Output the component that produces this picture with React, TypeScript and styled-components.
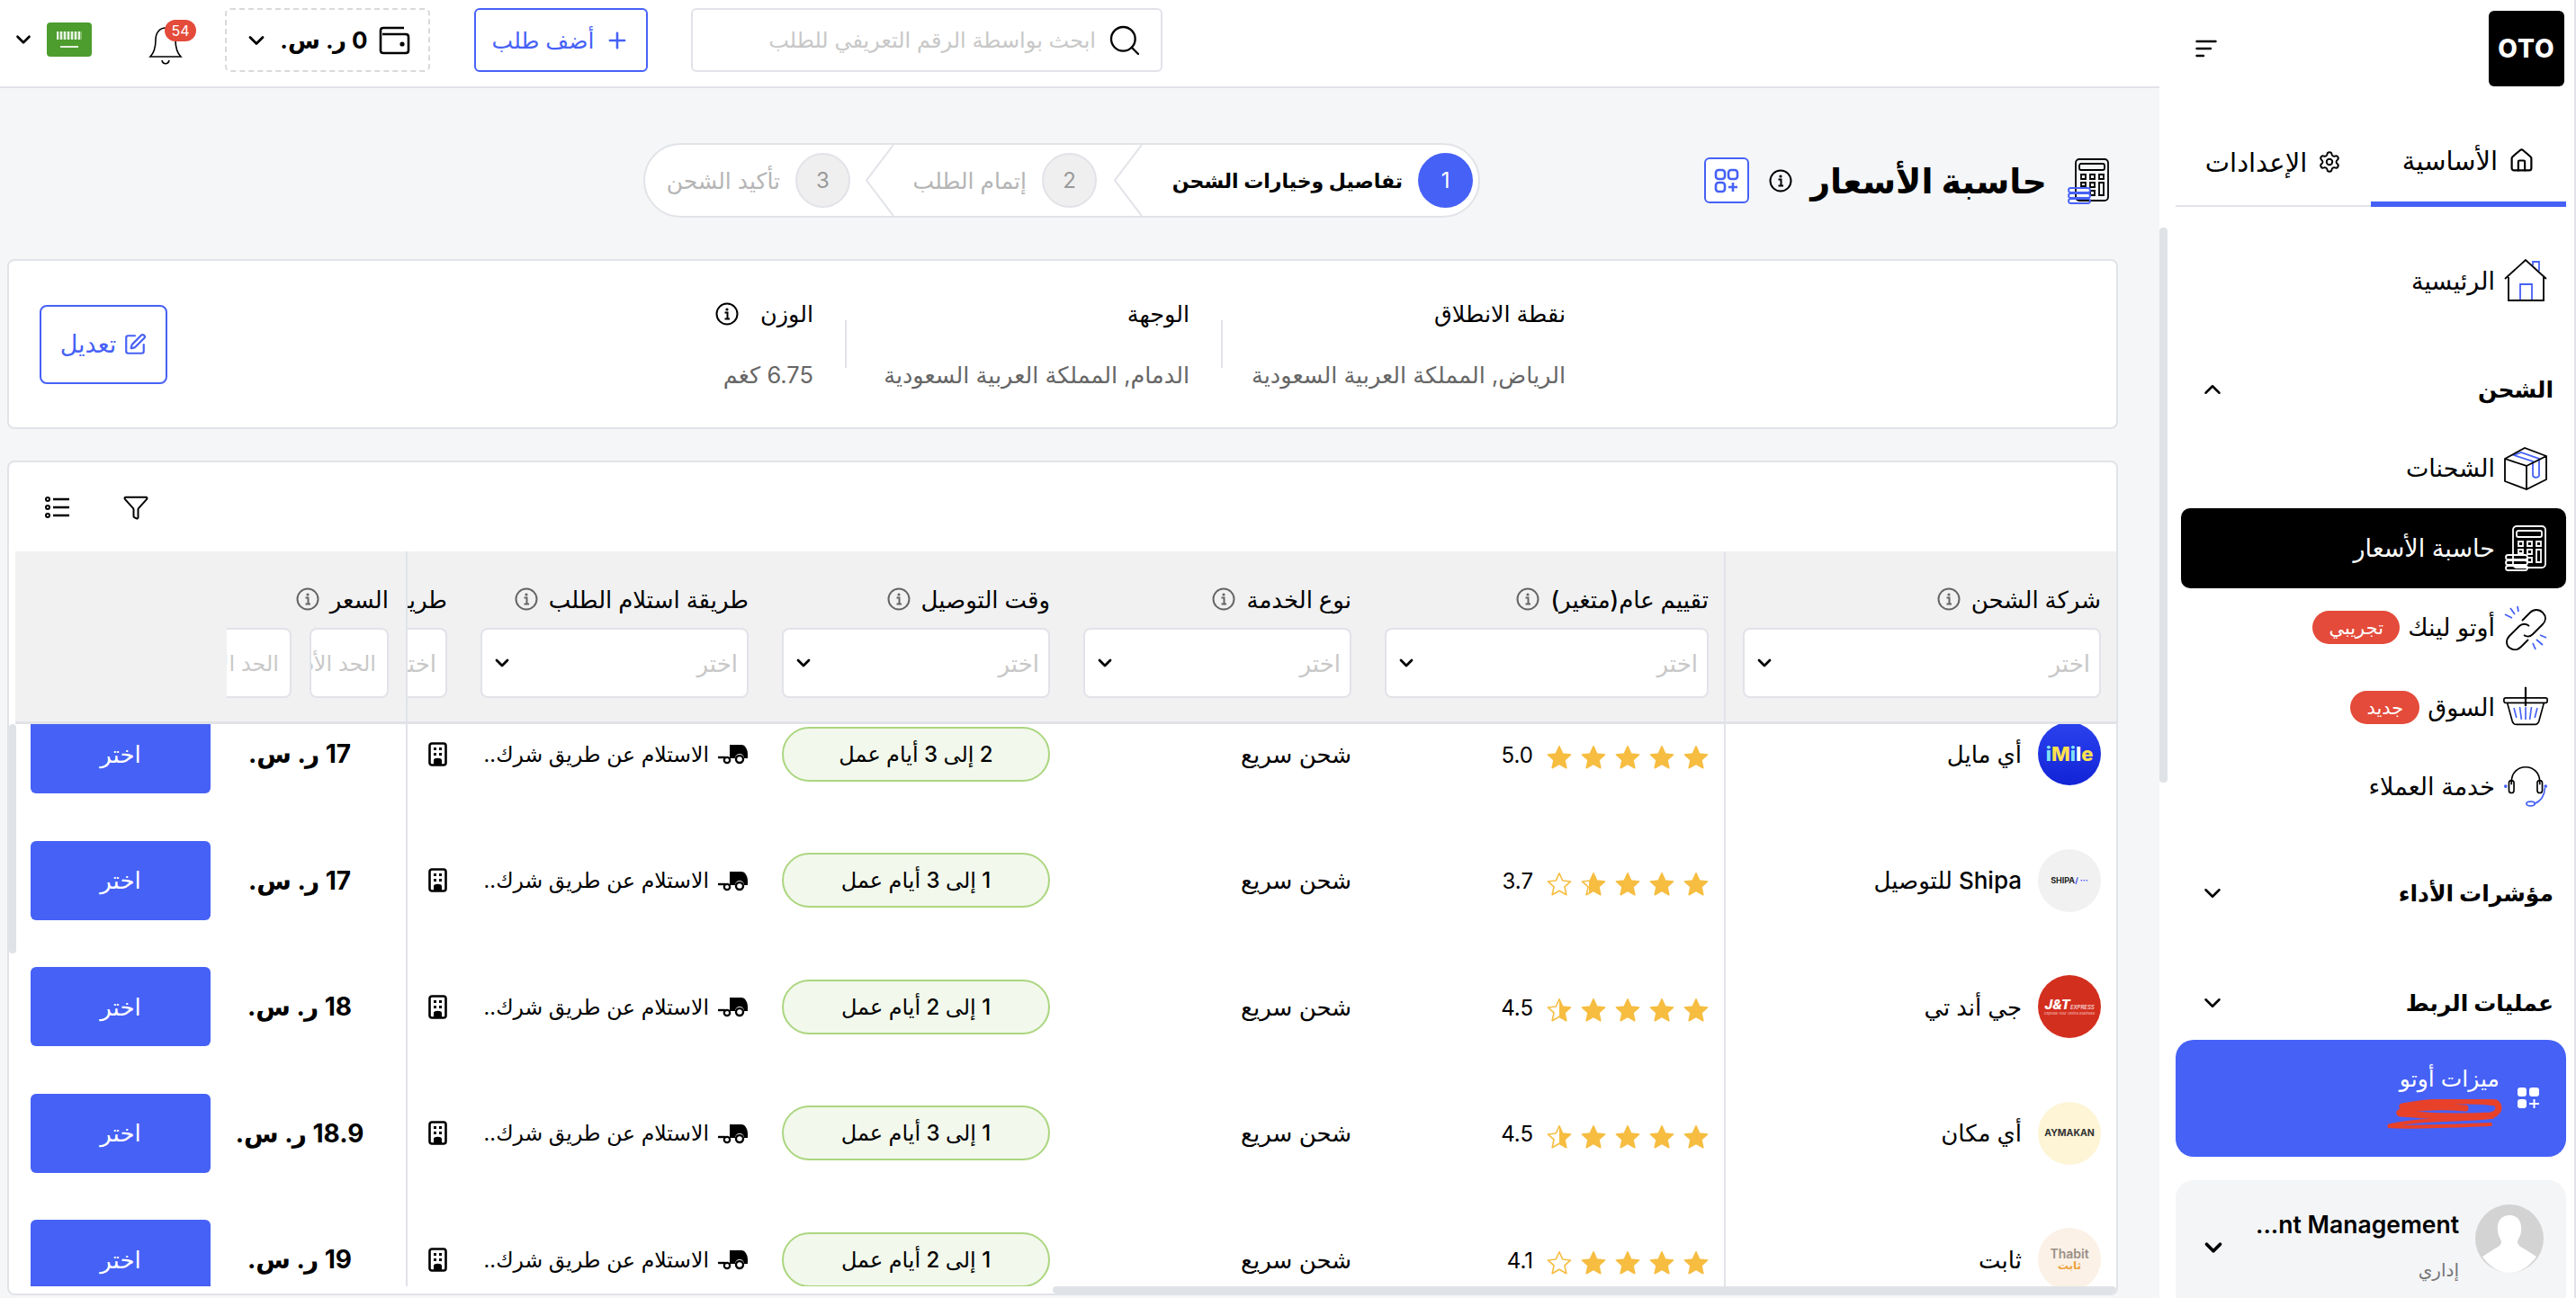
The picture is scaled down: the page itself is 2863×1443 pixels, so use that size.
import React from "react";
import styled, { createGlobalStyle } from "styled-components";
import { ChevronDown, ChevronUp, Plus, Search, Settings, Home, SquarePen, Funnel } from "lucide-react";

const blue = "#4661f6";
const line = "#e1e3e8";

const GlobalStyle = createGlobalStyle`
  html, body { margin: 0; padding: 0; height: 100%; overflow: hidden; background: #f5f6f8; }
  * { box-sizing: border-box; }
  body { font-family: "Inter", "DejaVu Sans", sans-serif; color: #000; }
`;

const Page = styled.div`
  direction: rtl;
  display: flex;
  width: 2863px;
  height: 1443px;
  overflow: hidden;
`;

/* sidebar */
const Sidebar = styled.aside`
  position: relative;
  flex: 0 0 463px;
  height: 1443px;
  background: #fff;
  border-right: 2px solid ${line};
  padding: 12px 9px 0 18px;
  display: flex;
  flex-direction: column;
  overflow: hidden;
`;
const SideThumb = styled.div`
  position: absolute;
  left: 0;
  top: 253px;
  width: 9px;
  height: 617px;
  border-radius: 4px;
  background: #dfe2e6;
`;
const SideTop = styled.div`
  display: flex;
  flex: none;
  justify-content: space-between;
  align-items: center;
  height: 84px;
  padding-left: 22px;
  padding-right: 2px;
`;
const Logo = styled.div`
  width: 84px;
  height: 84px;
  border-radius: 6px;
  background: #000;
  color: #fff;
  font-weight: 800;
  font-size: 28px;
  letter-spacing: 1px;
  display: flex;
  align-items: center;
  justify-content: center;
`;
const Tabs = styled.div`
  display: flex;
  flex: none;
  margin-top: 46px;
  height: 88px;
`;
const Tab = styled.div<{ $on?: boolean }>`
  flex: 1;
  display: flex;
  align-items: center;
  justify-content: center;
  gap: 12px;
  font-size: 29px;
  padding-bottom: 10px;
  height: 88px;
  border-bottom: ${(p) => (p.$on ? `6px solid ${blue}` : `2px solid ${line}`)};
`;
const NavList = styled.div`
  display: flex;
  flex: none;
  flex-direction: column;
`;
const NavRow = styled.div<{ $active?: boolean; $top: number }>`
  display: flex;
  align-items: center;
  gap: 9px;
  height: 88.5px;
  margin-top: ${(p) => p.$top}px;
  padding-right: 20px;
  font-size: 27px;
  white-space: nowrap;
  width: 428px;
  border-radius: 10px;
  background: ${(p) => (p.$active ? "#000" : "transparent")};
  color: ${(p) => (p.$active ? "#fff" : "#000")};
`;
const NavIcon = styled.span`
  width: 50px;
  height: 50px;
  flex: none;
  display: flex;
  align-items: center;
  justify-content: center;
`;
const Badge = styled.span`
  background: #e44b3a;
  color: #fff;
  font-size: 21px;
  height: 37px;
  padding: 0 18px;
  border-radius: 19px;
  display: inline-flex;
  align-items: center;
`;
const SectionRow = styled.div<{ $top: number }>`
  display: flex;
  flex: none;
  align-items: center;
  justify-content: space-between;
  height: 40px;
  margin-top: ${(p) => p.$top}px;
  padding: 0 14px 0 26px;
  font-size: 25px;
  font-weight: 700;
`;
const PromoCard = styled.div`
  flex: none;
  margin-top: 21px;
  height: 130px;
  border-radius: 20px;
  background: ${blue};
  color: #fff;
  display: flex;
  align-items: center;
  padding: 0 29px 0 0;
  gap: 19px;
  font-size: 25px;
`;
const PromoBody = styled.div`
  display: flex;
  flex-direction: column;
  gap: 8px;
  margin-top: -2px;
`;
const ProfileCard = styled.div`
  flex: none;
  margin-top: 26px;
  height: 140px;
  border-radius: 20px 20px 0 0;
  background: #f4f5f7;
  display: flex;
  align-items: flex-start;
  padding: 27px 25px 0 0;
  gap: 18px;
`;
const ProfileText = styled.div`
  flex: 1;
  display: flex;
  flex-direction: column;
  align-items: flex-start;
`;
const ProfileName = styled.div`
  direction: ltr;
  font-size: 26.5px;
  font-weight: 600;
  line-height: 44px;
  white-space: nowrap;
`;
const ProfileRole = styled.div`
  color: #777;
  font-size: 20px;
  margin-top: 17px;
`;
const ProfileChevron = styled.div`
  margin: 33px 0 0 27px;
`;

/* main */
const Main = styled.main`
  flex: 1;
  min-width: 0;
  height: 1443px;
  display: flex;
  flex-direction: column;
`;
const TopBar = styled.header`
  height: 98px;
  flex: none;
  background: #fff;
  border-bottom: 2px solid ${line};
  display: flex;
  justify-content: flex-end;
  align-items: flex-start;
  padding: 9px 0 0 13px;
`;
const SearchBox = styled.div`
  width: 524px;
  height: 71px;
  border: 2px solid ${line};
  border-radius: 6px;
  display: flex;
  align-items: center;
  gap: 12px;
  padding: 0 20px;
  color: #c8c8c8;
  font-size: 24px;
  white-space: nowrap;
`;
const AddButton = styled.div`
  width: 193px;
  height: 71px;
  margin-right: 48px;
  border: 2px solid ${blue};
  border-radius: 6px;
  color: ${blue};
  font-size: 25px;
  display: flex;
  align-items: center;
  justify-content: center;
  gap: 12px;
`;
const WalletBox = styled.div`
  width: 228px;
  height: 71px;
  margin-right: 49px;
  border: 2px dashed #d9d9d9;
  border-radius: 6px;
  display: flex;
  align-items: center;
  justify-content: center;
  gap: 12px;
  font-size: 26px;
  font-weight: 700;
`;
const BellWrap = styled.div`
  position: relative;
  width: 40px;
  height: 48px;
  margin: 17px 46px 0 0;
`;
const BellCount = styled.span`
  position: absolute;
  top: -4px;
  left: 19px;
  width: 35px;
  height: 24px;
  border-radius: 12px;
  background: #e44b3a;
  color: #fff;
  font-size: 16px;
  display: flex;
  align-items: center;
  justify-content: center;
  direction: ltr;
`;
const FlagGroup = styled.div`
  display: flex;
  align-items: center;
  gap: 13px;
  margin: 16px 62px 0 0;
`;
const Flag = styled.div`
  width: 50px;
  height: 38px;
  border-radius: 4px;
  background: #4c9c2e;
  display: flex;
  flex-direction: column;
  align-items: center;
  justify-content: center;
  gap: 7px;
`;
const FlagScript = styled.span`
  width: 28px;
  height: 9px;
  background: repeating-linear-gradient(90deg, #e9f4e4 0 2px, #7fb86a 2px 4px);
`;
const FlagSword = styled.span`
  width: 20px;
  height: 1.500px;
  background: #e6f2e1;
`;

const Content = styled.div`
  flex: 1;
  min-height: 0;
  padding: 0 46px 0 8px;
  display: flex;
  flex-direction: column;
`;
const TitleRow = styled.div`
  height: 190px;
  flex: none;
  display: flex;
  align-items: center;
  padding: 15px 9px 0 0;
`;
const TitleIcon = styled.span`
  width: 48px;
  height: 52px;
  display: flex;
  margin-left: 22px;
`;
const Title = styled.h1`
  margin: 0 0 0 20px;
  font-size: 38px;
  font-weight: 700;
  white-space: nowrap;
`;
const AppsButton = styled.div`
  width: 50px;
  height: 51px;
  margin-right: 22px;
  border: 2px solid ${blue};
  border-radius: 6px;
  background: #fff;
  display: flex;
  align-items: center;
  justify-content: center;
`;
const Stepper = styled.div`
  width: 930px;
  height: 83px;
  margin-right: auto;
  margin-left: 707px;
  background: #fff;
  border: 2px solid ${line};
  border-radius: 42px;
  display: flex;
  align-items: center;
  padding-right: 6px;
`;
const StepItem = styled.div<{ $w: number; $on?: boolean; $lead?: number }>`
  flex: 0 0 ${(p) => p.$w}px;
  margin-right: ${(p) => p.$lead ?? 0}px;
  display: flex;
  align-items: center;
  gap: 17px;
  font-size: ${(p) => (p.$on ? 22 : 25)}px;
  white-space: nowrap;
  color: ${(p) => (p.$on ? "#000" : "#b5b5b5")};
  font-weight: ${(p) => (p.$on ? 600 : 400)};
`;
const StepDot = styled.span<{ $on?: boolean }>`
  width: 61px;
  height: 61px;
  flex: none;
  border-radius: 50%;
  display: flex;
  align-items: center;
  justify-content: center;
  font-size: 24px;
  font-weight: 400;
  background: ${(p) => (p.$on ? blue : "#efefef")};
  color: ${(p) => (p.$on ? "#fff" : "#999")};
  border: ${(p) => (p.$on ? "none" : `2px solid ${line}`)};
`;
const StepNotch = styled.svg`
  flex: none;
  height: 79px;
  width: 34px;
`;

const InfoCard = styled.section`
  height: 189px;
  flex: none;
  background: #fff;
  border: 2px solid ${line};
  border-radius: 8px;
  display: flex;
  align-items: center;
  padding: 0 612px 0 34px;
`;
const InfoCol = styled.div`
  width: 381px;
  display: flex;
  flex-direction: column;
  gap: 37px;
  white-space: nowrap;
  &:last-of-type { width: auto; }
`;
const InfoLabel = styled.div`
  display: flex;
  align-items: center;
  gap: 24px;
  font-size: 25.500px;
  line-height: 32px;
  font-weight: 500;
`;
const InfoValue = styled.div`
  font-size: 25.500px;
  line-height: 30px;
  color: #666;
`;
const InfoRule = styled.div`
  width: 2px;
  height: 53px;
  flex: none;
  background: ${line};
  margin-left: 35px;
`;
const EditButton = styled.div`
  width: 142px;
  height: 88px;
  margin-right: auto;
  border: 2px solid ${blue};
  border-radius: 8px;
  color: ${blue};
  display: flex;
  align-items: center;
  justify-content: center;
  gap: 8px;
  font-size: 27px;
`;

const TableCard = styled.section`
  position: relative;
  margin-top: 35px;
  height: 928px;
  flex: none;
  background: #fff;
  border: 2px solid ${line};
  border-radius: 8px;
  display: flex;
  flex-direction: column;
  overflow: hidden;
  padding-left: 7px;
`;
const TableThumb = styled.div`
  position: absolute;
  left: 0;
  top: 291px;
  width: 8px;
  height: 255px;
  border-radius: 4px;
  background: #dfe2e6;
`;
const Tools = styled.div`
  height: 99px;
  flex: none;
  display: flex;
  justify-content: flex-end;
  align-items: center;
  gap: 58px;
  padding: 0 0 0 33px;
`;
const Row = styled.div<{ $head?: boolean }>`
  display: flex;
  flex: none;
  height: ${(p) => (p.$head ? "192px" : "140.5px")};
  background: ${(p) => (p.$head ? "#f1f1f2" : "#fff")};
  border-bottom: ${(p) => (p.$head ? `3px solid ${line}` : "none")};
`;
const RowsClip = styled.div`
  flex: 1;
  min-height: 0;
  overflow: hidden;
`;
const RowsScroll = styled.div`
  margin-top: -37px;
`;
const Scrollable = styled.div`
  flex: 1;
  min-width: 0;
  display: flex;
  overflow: hidden;
`;
const Cell = styled.div<{ $w: number; $first?: boolean }>`
  flex: 0 0 ${(p) => p.$w}px;
  padding: 0 17px 0 ${(p) => (p.$first ? 19 : 20)}px;
  display: flex;
  align-items: center;
  border-left: ${(p) => (p.$first ? `2px solid ${line}` : "none")};
  font-size: 26px;
`;
const HeadCell = styled(Cell)`
  flex-direction: column;
  align-items: stretch;
  padding-top: 38px;
`;
const HeadLabel = styled.div`
  display: flex;
  align-items: center;
  gap: 12px;
  height: 30px;
  font-size: 26px;
  font-weight: 500;
  white-space: nowrap;
`;
const SelectBox = styled.div`
  margin-top: 17px;
  height: 78px;
  background: #fff;
  border: 2px solid ${line};
  border-radius: 8px;
  display: flex;
  align-items: center;
  justify-content: space-between;
  padding: 0 10px 0 10px;
  color: #c8c8c8;
  font-size: 26px;
  white-space: nowrap;
`;
const ClippedCell = styled.div`
  flex: 1;
  min-width: 0;
  padding-right: 17px;
  display: flex;
  align-items: center;
  overflow: hidden;
`;
const ClippedHead = styled(ClippedCell)`
  flex-direction: column;
  align-items: flex-start;
  padding-top: 38px;
`;
const ClippedSelect = styled(SelectBox)`
  width: 120px;
  flex: none;
`;
const FrozenHead = styled.div`
  flex: 0 0 436px;
  border-right: 2px solid ${line};
  padding: 38px 19px 0 0;
  display: flex;
  flex-direction: column;
`;
const FrozenCell = styled.div`
  flex: 0 0 436px;
  border-right: 2px solid ${line};
  padding: 0 19px 0 17px;
  display: flex;
  align-items: center;
`;
const RangeRow = styled.div`
  display: flex;
  gap: 20px;
  overflow: hidden;
  width: 180px;
`;
const RangeInput = styled(SelectBox)<{ $w: number; $cut?: boolean }>`
  flex: 0 0 ${(p) => p.$w}px;
  overflow: hidden;
  padding: 0 12px 0 0;
  font-size: 24px;
  border-left: ${(p) => (p.$cut ? "none" : `2px solid ${line}`)};
  border-radius: ${(p) => (p.$cut ? "0 8px 8px 0" : "8px")};
`;
const Carrier = styled.div`
  display: flex;
  align-items: center;
  gap: 18px;
  font-weight: 500;
  font-size: 26px;
  white-space: nowrap;
`;
const Avatar = styled.div<{ $bg: string }>`
  width: 70px;
  height: 70px;
  flex: none;
  border-radius: 50%;
  background: ${(p) => p.$bg};
  display: flex;
  flex-direction: column;
  align-items: center;
  justify-content: center;
  overflow: hidden;
  direction: ltr;
`;
const LogoWord = styled.span<{ $c: string; $s: number; $w?: number; $i?: boolean }>`
  color: ${(p) => p.$c};
  font-size: ${(p) => p.$s}px;
  font-weight: ${(p) => p.$w ?? 700};
  font-style: ${(p) => (p.$i ? "italic" : "normal")};
  line-height: 1.05;
  white-space: nowrap;
`;
const Tint = styled.span<{ $c: string }>`
  color: ${(p) => p.$c};
`;
const Stars = styled.div`
  display: flex;
  align-items: center;
  gap: 10px;
  margin-top: 8px;
`;
const Score = styled.span`
  font-size: 24px;
  margin-right: 5px;
  margin-top: -6px;
`;
const Pill = styled.div`
  width: 298px;
  height: 61px;
  border: 2px solid #abd67f;
  border-radius: 31px;
  background: #f2f8ec;
  display: flex;
  align-items: center;
  justify-content: center;
  font-size: 24px;
  font-weight: 500;
  white-space: nowrap;
`;
const Pickup = styled.div`
  display: flex;
  align-items: center;
  gap: 10px;
  font-size: 23.500px;
  white-space: nowrap;
`;
const Price = styled.div`
  flex: 1;
  text-align: center;
  font-size: 28px;
  font-weight: 700;
  white-space: nowrap;
`;
const ChooseButton = styled.div`
  flex: 0 0 200px;
  height: 88px;
  border-radius: 6px;
  background: ${blue};
  color: #fff;
  font-size: 26px;
  display: flex;
  align-items: center;
  justify-content: center;
`;
const HScroll = styled.div`
  flex: none;
  height: 8px;
  display: flex;
  justify-content: flex-start;
`;
const HThumb = styled.div`
  width: 1182px;
  height: 8px;
  background: #dfe2e6;
  border-radius: 4px;
`;
const Scribble = styled.svg`
  display: block;
  width: 132px;
  height: 34px;
  margin-right: -4px;
`;

/* icons */
const InfoDot = ({ c = "#666" }: { c?: string }) => (
  <svg width="26" height="26" viewBox="0 0 26 26" fill="none">
    <circle cx="13" cy="13" r="11.5" stroke={c} strokeWidth="2" />
    <circle cx="13" cy="8" r="1.6" fill={c} />
    <path d="M10.5 11.5H13.5V18M10.5 18.5H16" stroke={c} strokeWidth="2" />
  </svg>
);

const MenuIcon = () => (
  <svg width="24" height="20" viewBox="0 0 24 20" fill="none" stroke="#000" strokeWidth="2.4" strokeLinecap="round">
    <path d="M1.5 2H22.5M1.5 10H17M1.5 18H9" />
  </svg>
);

const ListIcon = () => (
  <svg width="28" height="24" viewBox="0 0 28 24" fill="none" stroke="#000" strokeWidth="2">
    <circle cx="3" cy="3" r="2" />
    <circle cx="3" cy="12" r="2" />
    <circle cx="3" cy="21" r="2" />
    <path d="M9 3H27M9 12H27M9 21H27" strokeWidth="2.4" />
  </svg>
);

const HouseIcon = () => (
  <svg width="48" height="48" viewBox="0 0 48 48" fill="none" strokeWidth="1.8">
    <path d="M32 7V3H39V13" stroke={blue} />
    <path d="M18 46V28H31V46" stroke={blue} />
    <path d="M1 22L24 1L47 22M5 20V46H44V20" stroke="#000" />
  </svg>
);

const BoxIcon = () => (
  <svg width="48" height="48" viewBox="0 0 48 48" fill="none" strokeWidth="1.8">
    <path d="M11 9L32 16V31C32 34 37 35 39 32V13L19 6Z" stroke={blue} />
    <path d="M1 13L23 1L47 10V36L25 47L1 38ZM1 13L25 21V47M25 21L47 10" stroke="#000" />
  </svg>
);

const CalcIcon = ({ c, coin }: { c: string; coin: string }) => (
  <svg width="48" height="52" viewBox="0 0 48 52" fill="none" strokeWidth="1.8">
    <rect x="10" y="2" width="36" height="46" rx="4" stroke={c} />
    <rect x="14" y="7" width="28" height="7" rx="2" stroke={c} />
    <path d="M16 19h5v5h-5zM26 19h5v5h-5zM36 19h5v5h-5zM26 28h5v5h-5zM36 28h5v14h-5zM26 37h5v5h-5zM16 28h5v4h-5z" stroke={c} />
    <rect x="2" y="34" width="24" height="5" rx="2.5" fill="none" stroke={coin} />
    <rect x="2" y="40" width="24" height="5" rx="2.5" fill="none" stroke={coin} />
    <rect x="2" y="46" width="24" height="5" rx="2.5" fill="none" stroke={coin} />
  </svg>
);

const LinkIcon = () => (
  <svg width="50" height="50" viewBox="0 0 50 50" fill="none" strokeWidth="1.8">
    <path d="M21 17L30 8C34 4 40 4 44 8C48 12 48 17 44 21L33 32C30 35 26 35 23 33" stroke="#000" />
    <path d="M29 23C26 20 21 20 18 23L7 34C3 38 3 44 7 47C11 50 16 50 20 46L28 38" stroke="#000" />
    <path d="M2 10L10 14M8 3L13 10M16 1L17 7M48 36L41 33M44 44L37 38M36 49L33 42" stroke={blue} />
  </svg>
);

const BasketIcon = () => (
  <svg width="54" height="50" viewBox="0 0 54 50" fill="none" strokeWidth="1.8">
    <path d="M27 1V24" stroke="#000" strokeWidth="2.4" />
    <rect x="1" y="14" width="52" height="6" rx="2" stroke="#000" />
    <path d="M5 20L11 42C12 45 13 46 16 46H38C41 46 42 45 43 42L49 20" stroke="#000" />
    <path d="M13 26L16 38M20 25L22 40M27 25V40M34 25L32 40M41 26L38 38" stroke={blue} />
  </svg>
);

const HeadsetIcon = () => (
  <svg width="54" height="54" viewBox="0 0 54 54" fill="none" strokeWidth="1.8">
    <path d="M10 24V21C10 -3 44 -3 44 21V24" stroke="#000" />
    <rect x="7" y="19" width="6" height="15" rx="3" stroke="#000" />
    <rect x="41" y="19" width="6" height="15" rx="3" stroke="#000" />
    <path d="M50 28C50 36 46 44 37 47" stroke={blue} />
    <ellipse cx="33" cy="47" rx="5" ry="2.5" stroke={blue} />
    <circle cx="3" cy="26" r="2" fill={blue} />
    <circle cx="51" cy="26" r="2" fill={blue} />
  </svg>
);

const AppsIcon = ({ c, size = 30 }: { c: string; size?: number }) => (
  <svg width={size} height={size} viewBox="0 0 30 30" fill="none" stroke={c} strokeWidth="2.6">
    <rect x="3" y="3" width="10" height="10" rx="3" />
    <rect x="17" y="3" width="10" height="10" rx="3" />
    <rect x="3" y="17" width="10" height="10" rx="3" />
    <path d="M22 17V27M17 22H27" />
  </svg>
);

const AppsSolid = () => (
  <svg width="26" height="26" viewBox="0 0 26 26" fill="#fff">
    <rect x="1" y="1" width="10" height="10" rx="3" />
    <rect x="14" y="1" width="11" height="10" rx="3" />
    <rect x="1" y="14" width="10" height="10" rx="3" />
    <path d="M18.5 14h2v4h4.500v2h-4.500v4h-2v-4H14v-2h4.500z" />
  </svg>
);

const WalletIcon = () => (
  <svg width="36" height="32" viewBox="0 0 36 32" fill="none" stroke="#000" strokeWidth="2.6">
    <path d="M4 9H30C32 9 33 10 33 12V27C33 29 32 30 30 30H5C3 30 2 29 2 27V5C2 3 3 2 5 2H28" />
    <circle cx="26" cy="20" r="1.3" fill="#000" />
  </svg>
);

const BellIcon = () => (
  <svg width="40" height="48" viewBox="0 0 40 48" fill="none" stroke="#000" strokeWidth="1.6">
    <path d="M3 37C8 32 9 25 9 18C9 10 14 5 20 5C26 5 31 10 31 18C31 25 32 32 37 37Z" />
    <path d="M16 41C17 46 23 46 24 41" />
  </svg>
);

const TruckIcon = () => (
  <svg width="34" height="24" viewBox="0 0 34 24">
    <path d="M13 2H26C30 2 33 7 33 12V17H29A5 5 0 0 0 19 17H13Z" fill="#000" />
    <path d="M0 16H8" stroke="#000" strokeWidth="2.4" />
    <circle cx="24" cy="18" r="4" fill="#fff" stroke="#000" strokeWidth="2.4" />
    <circle cx="10" cy="19" r="3.2" fill="#fff" stroke="#000" strokeWidth="2.2" />
    <path d="M14 15H19" stroke="#000" strokeWidth="2.4" />
  </svg>
);

const BuildingIcon = () => (
  <svg width="21" height="27" viewBox="0 0 21 27" fill="none">
    <rect x="1.500" y="1.500" width="18" height="24" rx="2.500" stroke="#000" strokeWidth="2.6" />
    <path d="M6 6h3v3H6zM12 6h3v3h-3zM6 12h3v3H6zM12 12h3v3h-3zM6 25v-5c0-3 9-3 9 0v5z" fill="#000" />
  </svg>
);

const StarIcon = ({ fill, id }: { fill: number; id: string }) => (
  <svg width="28" height="28" viewBox="0 0 24 24">
    <defs>
      <linearGradient id={id} x1="1" x2="0" y1="0" y2="0">
        <stop offset={fill} stopColor="#f6bd41" />
        <stop offset={fill} stopColor="#fff" />
      </linearGradient>
    </defs>
    <path
      d="M12 1.500L15.200 8.600L22.800 9.400L17.100 14.500L18.700 22L12 18.200L5.300 22L6.900 14.500L1.200 9.400L8.800 8.600Z"
      fill={`url(#${id})`}
      stroke="#f6bd41"
      strokeWidth="1.4"
      strokeLinejoin="round"
    />
  </svg>
);

const Rating = ({ value, name }: { value: number; name: string }) => (
  <Stars>
    {[0, 1, 2, 3, 4].map((i) => {
      const f = Math.max(0, Math.min(1, value - i));
      const shown = i === 4 && f < 0.3 ? 0 : f;
      return <StarIcon key={i} fill={shown} id={`${name}-${i}`} />;
    })}
    <Score>{value.toFixed(1)}</Score>
  </Stars>
);

const Chevron = () => <ChevronDown size={24} strokeWidth={2.8} color="#000" />;

const PersonAvatar = () => (
  <svg width="76" height="76" viewBox="0 0 76 76">
    <circle cx="38" cy="38" r="38" fill="#d3d3d3" />
    <path d="M38 12C48 12 52 20 51 29C51 34 48 38 47 41C47 45 50 47 54 49L68 58C60 69 50 76 38 76C26 76 16 69 8 58L22 49C26 47 29 45 29 41C28 38 25 34 25 29C24 20 28 12 38 12Z" fill="#fff" />
  </svg>
);

const carriers = [
  {
    name: "أي مايل",
    rate: 5.0,
    time: "2 إلى 3 أيام عمل",
    price: "17",
    bg: "linear-gradient(180deg,#2b42ee,#1224d6)",
    logo: (
      <LogoWord $c="#fff" $s={22} $w={800}>
        <Tint $c="#7fe3f5">i</Tint>
        <Tint $c="#ffe14d">M</Tint>
        <Tint $c="#7fe3f5">i</Tint>
        <Tint $c="#fff">l</Tint>
        <Tint $c="#ffe14d">e</Tint>
      </LogoWord>
    ),
  },
  {
    name: "Shipa للتوصيل",
    rate: 3.7,
    time: "1 إلى 3 أيام عمل",
    price: "17",
    bg: "#f1f1f2",
    logo: (
      <LogoWord $c="#222" $s={9} $w={700}>
        SHIPA<Tint $c="#3a4cf0">/ ···</Tint>
      </LogoWord>
    ),
  },
  {
    name: "جي أند تي",
    rate: 4.5,
    time: "1 إلى 2 أيام عمل",
    price: "18",
    bg: "#d32f1f",
    logo: (
      <>
        <LogoWord $c="#fff" $s={15} $w={800} $i>
          J&T<LogoWord $c="#fff" $s={6} $w={400} $i>
            EXPRESS
          </LogoWord>
        </LogoWord>
        <LogoWord $c="#f6c9c2" $s={4} $w={400} $i>
          Express Your Online Business
        </LogoWord>
      </>
    ),
  },
  {
    name: "أي مكان",
    rate: 4.5,
    time: "1 إلى 3 أيام عمل",
    price: "18.9",
    bg: "#fdf5d6",
    logo: (
      <LogoWord $c="#333" $s={10.500} $w={700}>
        AYMAKAN
      </LogoWord>
    ),
  },
  {
    name: "ثابت",
    rate: 4.1,
    time: "1 إلى 2 أيام عمل",
    price: "19",
    bg: "#fbf1e6",
    logo: (
      <>
        <LogoWord $c="#9a8f86" $s={14} $w={600}>
          Thabit
        </LogoWord>
        <LogoWord $c="#eda23c" $s={12} $w={600}>
          ثابت
        </LogoWord>
      </>
    ),
  },
];

function App() {
  return (
    <Page>
      <GlobalStyle />
      <Sidebar>
        <SideThumb />
        <SideTop>
          <Logo>OTO</Logo>
          <MenuIcon />
        </SideTop>
        <Tabs>
          <Tab $on>
            <Home size={29} strokeWidth={1.8} />
            الأساسية
          </Tab>
          <Tab>
            <Settings size={26} strokeWidth={1.8} />
            الإعدادات
          </Tab>
        </Tabs>
        <NavList>
          <NavRow $top={38}>
            <NavIcon><HouseIcon /></NavIcon>
            الرئيسية
          </NavRow>
          <SectionRow $top={56}>
            الشحن
            <ChevronUp size={30} strokeWidth={2} />
          </SectionRow>
          <NavRow $top={24}>
            <NavIcon><BoxIcon /></NavIcon>
            الشحنات
          </NavRow>
          <NavRow $active $top={0}>
            <NavIcon><CalcIcon c="#fff" coin="#fff" /></NavIcon>
            حاسبة الأسعار
          </NavRow>
          <NavRow $top={0}>
            <NavIcon><LinkIcon /></NavIcon>
            أوتو لينك
            <Badge>تجريبي</Badge>
          </NavRow>
          <NavRow $top={0}>
            <NavIcon><BasketIcon /></NavIcon>
            السوق
            <Badge>جديد</Badge>
          </NavRow>
          <NavRow $top={0}>
            <NavIcon><HeadsetIcon /></NavIcon>
            خدمة العملاء
          </NavRow>
          <SectionRow $top={54}>
            مؤشرات الأداء
            <ChevronDown size={30} strokeWidth={2} />
          </SectionRow>
          <SectionRow $top={82}>
            عمليات الربط
            <ChevronDown size={30} strokeWidth={2} />
          </SectionRow>
        </NavList>
        <PromoCard>
          <AppsSolid />
          <PromoBody>
            ميزات أوتو
            <Scribble viewBox="0 0 132 34" fill="none">
              <path d="M20 8C50 2 100 0 124 4C130 10 126 16 118 18C80 20 40 18 18 16C10 14 40 6 90 10" stroke="#e8412a" strokeWidth="7" strokeLinecap="round" />
              <path d="M120 20C80 24 30 22 4 30C30 32 70 30 118 28" stroke="#e8412a" strokeWidth="4" strokeLinecap="round" />
            </Scribble>
          </PromoBody>
        </PromoCard>
        <ProfileCard>
          <PersonAvatar />
          <ProfileText>
            <ProfileName>...nt Management</ProfileName>
            <ProfileRole>إداري</ProfileRole>
          </ProfileText>
          <ProfileChevron>
            <ChevronDown size={30} strokeWidth={3} />
          </ProfileChevron>
        </ProfileCard>
      </Sidebar>

      <Main>
        <TopBar>
          <SearchBox>
            <Search size={40} strokeWidth={1.4} color="#000" />
            ابحث بواسطة الرقم التعريفي للطلب
          </SearchBox>
          <AddButton>
            <Plus size={28} strokeWidth={2.2} />
            أضف طلب
          </AddButton>
          <WalletBox>
            <WalletIcon />
            0 ر. س.
            <ChevronDown size={28} strokeWidth={2.4} />
          </WalletBox>
          <BellWrap>
            <BellIcon />
            <BellCount>54</BellCount>
          </BellWrap>
          <FlagGroup>
            <Flag>
              <FlagScript />
              <FlagSword />
            </Flag>
            <ChevronDown size={26} strokeWidth={2.4} />
          </FlagGroup>
        </TopBar>

        <Content>
          <TitleRow>
            <TitleIcon><CalcIcon c="#000" coin={blue} /></TitleIcon>
            <Title>حاسبة الأسعار</Title>
            <InfoDot c="#000" />
            <AppsButton><AppsIcon c={blue} /></AppsButton>
            <Stepper>
              <StepItem $w={366} $on>
                <StepDot $on>1</StepDot>
                تفاصيل وخيارات الشحن
              </StepItem>
              <StepNotch viewBox="0 0 34 79" fill="none">
                <path d="M32 0L2 39.500L32 79" stroke={line} strokeWidth="2" />
              </StepNotch>
              <StepItem $w={224} $lead={18}>
                <StepDot>2</StepDot>
                إتمام الطلب
              </StepItem>
              <StepNotch viewBox="0 0 34 79" fill="none">
                <path d="M32 0L2 39.500L32 79" stroke={line} strokeWidth="2" />
              </StepNotch>
              <StepItem $w={220} $lead={16}>
                <StepDot>3</StepDot>
                تأكيد الشحن
              </StepItem>
            </Stepper>
          </TitleRow>

          <InfoCard>
            <InfoCol>
              <InfoLabel>نقطة الانطلاق</InfoLabel>
              <InfoValue>الرياض, المملكة العربية السعودية</InfoValue>
            </InfoCol>
            <InfoRule />
            <InfoCol>
              <InfoLabel>الوجهة</InfoLabel>
              <InfoValue>الدمام, المملكة العربية السعودية</InfoValue>
            </InfoCol>
            <InfoRule />
            <InfoCol>
              <InfoLabel>
                الوزن
                <InfoDot c="#000" />
              </InfoLabel>
              <InfoValue>6.75 كغم</InfoValue>
            </InfoCol>
            <EditButton>
              <SquarePen size={26} strokeWidth={2} />
              تعديل
            </EditButton>
          </InfoCard>

          <TableCard>
            <TableThumb />
            <Tools>
              <Funnel size={30} strokeWidth={1.6} />
              <ListIcon />
            </Tools>
            <Row $head>
              <Scrollable>
                <HeadCell $w={436} $first>
                  <HeadLabel>شركة الشحن <InfoDot /></HeadLabel>
                  <SelectBox>اختر<Chevron /></SelectBox>
                </HeadCell>
                <HeadCell $w={397}>
                  <HeadLabel>تقييم عام(متغير) <InfoDot /></HeadLabel>
                  <SelectBox>اختر<Chevron /></SelectBox>
                </HeadCell>
                <HeadCell $w={335}>
                  <HeadLabel>نوع الخدمة <InfoDot /></HeadLabel>
                  <SelectBox>اختر<Chevron /></SelectBox>
                </HeadCell>
                <HeadCell $w={335}>
                  <HeadLabel>وقت التوصيل <InfoDot /></HeadLabel>
                  <SelectBox>اختر<Chevron /></SelectBox>
                </HeadCell>
                <HeadCell $w={335}>
                  <HeadLabel>طريقة استلام الطلب <InfoDot /></HeadLabel>
                  <SelectBox>اختر<Chevron /></SelectBox>
                </HeadCell>
                <ClippedHead>
                  <HeadLabel>طريقة</HeadLabel>
                  <ClippedSelect>اختر</ClippedSelect>
                </ClippedHead>
              </Scrollable>
              <FrozenHead>
                <HeadLabel>السعر <InfoDot /></HeadLabel>
                <RangeRow>
                  <RangeInput $w={88}>الحد الأدنى</RangeInput>
                  <RangeInput $w={72} $cut>الحد الأقصى</RangeInput>
                </RangeRow>
              </FrozenHead>
            </Row>
            <RowsClip>
              <RowsScroll>
                {carriers.map((c, i) => (
                  <Row key={c.name}>
                    <Scrollable>
                      <Cell $w={436} $first>
                        <Carrier>
                          <Avatar $bg={c.bg}>{c.logo}</Avatar>
                          {c.name}
                        </Carrier>
                      </Cell>
                      <Cell $w={397}>
                        <Rating value={c.rate} name={`r${i}`} />
                      </Cell>
                      <Cell $w={335}>شحن سريع</Cell>
                      <Cell $w={335}>
                        <Pill>{c.time}</Pill>
                      </Cell>
                      <Cell $w={335}>
                        <Pickup>
                          <TruckIcon />
                          الاستلام عن طريق شرك..
                        </Pickup>
                      </Cell>
                      <ClippedCell>
                        <BuildingIcon />
                      </ClippedCell>
                    </Scrollable>
                    <FrozenCell>
                      <Price>{c.price} ر. س.</Price>
                      <ChooseButton>اختر</ChooseButton>
                    </FrozenCell>
                  </Row>
                ))}
              </RowsScroll>
            </RowsClip>
            <HScroll>
              <HThumb />
            </HScroll>
          </TableCard>
        </Content>
      </Main>
    </Page>
  );
}

export default App;
